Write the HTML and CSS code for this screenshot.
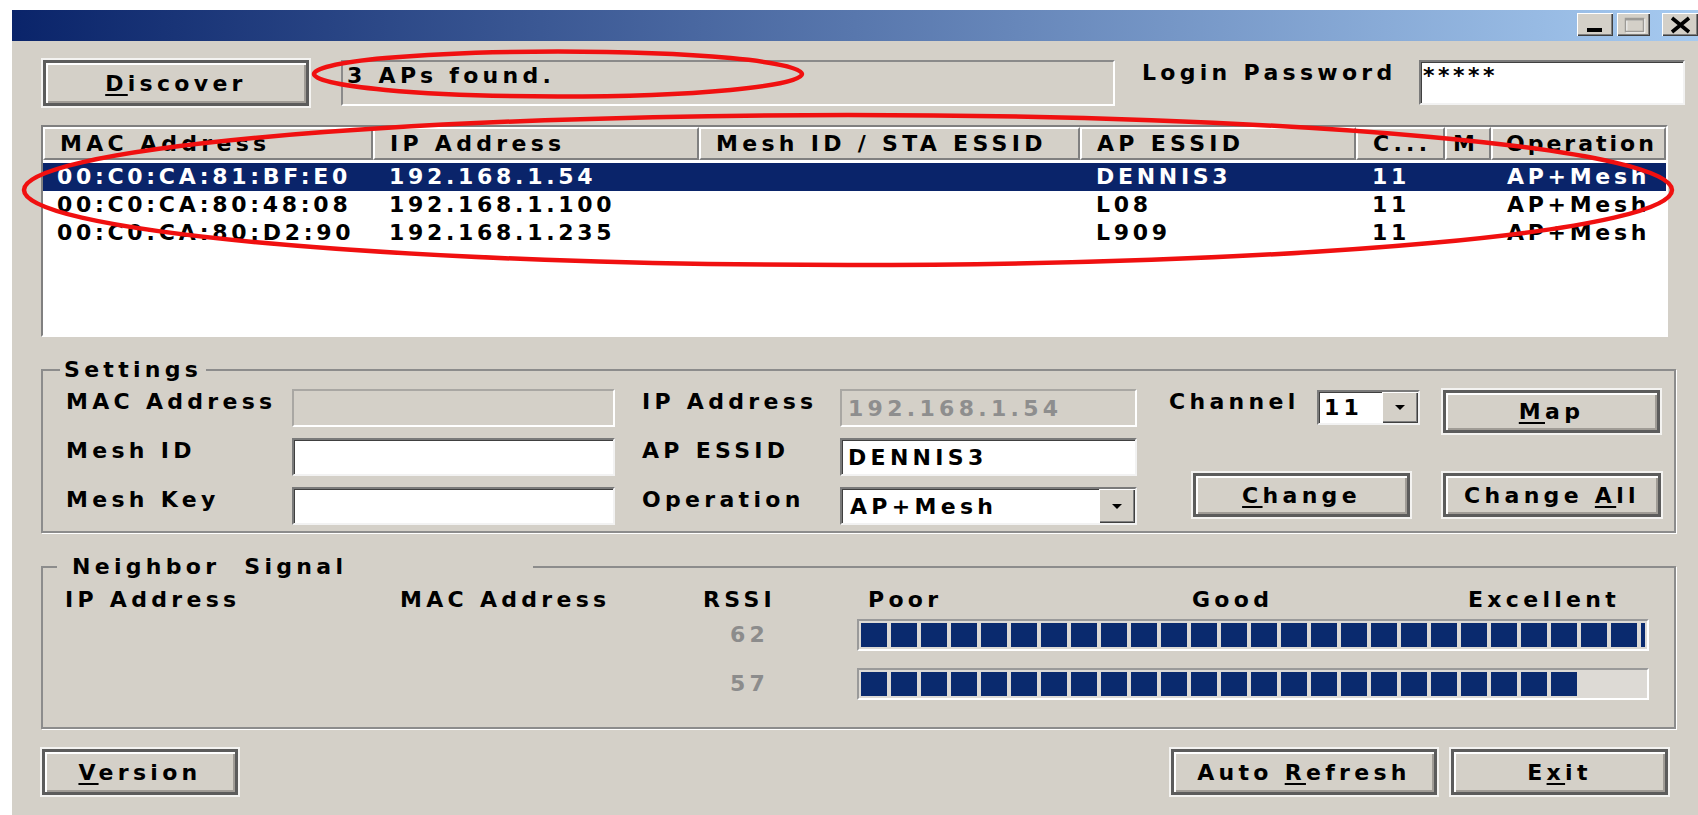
FILE: index.html
```html
<!DOCTYPE html>
<html lang="en">
<head>
<meta charset="utf-8">
<title>Mesh AP Utility</title>
<link rel="stylesheet" href="styles.css">
</head>
<body>
<div class="window">
  <div class="titlebar">
    <span class="cap-btn cap-min">
      <svg width="36" height="23" viewBox="0 0 36 23"><rect x="10" y="15" width="15" height="4" fill="#000"/></svg>
    </span>
    <span class="cap-btn cap-max">
      <svg width="33" height="23" viewBox="0 0 33 23">
        <rect x="9.5" y="6.5" width="18" height="13" fill="none" stroke="#ffffff" stroke-width="1.5"/>
        <rect x="8.5" y="5.5" width="18" height="13" fill="none" stroke="#9c9a96" stroke-width="1.5"/>
        <rect x="8" y="5" width="19" height="2.5" fill="#9c9a96"/>
      </svg>
    </span>
    <span class="cap-btn cap-close">
      <svg width="36" height="23" viewBox="0 0 36 23"><path d="M10 5 L27 19 M27 5 L10 19" stroke="#000" stroke-width="3.6" fill="none"/></svg>
    </span>
  </div>

  <div class="client">
    <div class="top-row">
      <button class="btn discover"><span><u>D</u>iscover</span></button>
      <div class="status">3 APs found.</div>
      <span class="login-label">Login Password</span>
      <div class="field password">*****</div>
    </div>

    <div class="list">
      <div class="list-head">
        <div class="th">MAC Address</div>
        <div class="th">IP Address</div>
        <div class="th">Mesh ID / STA ESSID</div>
        <div class="th">AP ESSID</div>
        <div class="th">C...</div>
        <div class="th th-narrow">M</div>
        <div class="th th-last">Operation</div>
      </div>
      <div class="list-body">
        <div class="list-row selected">
          <div class="td td-mac">00:C0:CA:81:BF:E0</div>
          <div class="td">192.168.1.54</div>
          <div class="td"></div>
          <div class="td">DENNIS3</div>
          <div class="td">11</div>
          <div class="td"></div>
          <div class="td">AP+Mesh</div>
        </div>
        <div class="list-row">
          <div class="td td-mac">00:C0:CA:80:48:08</div>
          <div class="td">192.168.1.100</div>
          <div class="td"></div>
          <div class="td">L08</div>
          <div class="td">11</div>
          <div class="td"></div>
          <div class="td">AP+Mesh</div>
        </div>
        <div class="list-row">
          <div class="td td-mac">00:C0:CA:80:D2:90</div>
          <div class="td">192.168.1.235</div>
          <div class="td"></div>
          <div class="td">L909</div>
          <div class="td">11</div>
          <div class="td"></div>
          <div class="td">AP+Mesh</div>
        </div>
      </div>
    </div>

    <fieldset class="group settings">
      <legend>Settings</legend>
      <div class="settings-grid">
        <span class="lbl">MAC Address</span>
        <div class="field disabled w-left"></div>
        <span class="lbl">IP Address</span>
        <div class="field disabled w-right">192.168.1.54</div>
        <div class="channel">
          <span class="lbl">Channel</span>
          <div class="combo combo-channel">
            <span class="combo-value">11</span>
            <span class="combo-button"></span>
          </div>
        </div>
        <button class="btn btn-map"><span><u>M</u>ap</span></button>

        <span class="lbl">Mesh ID</span>
        <div class="field w-left"></div>
        <span class="lbl">AP ESSID</span>
        <div class="field w-right">DENNIS3</div>
        <button class="btn btn-change"><span><u>C</u>hange</span></button>
        <button class="btn btn-change-all"><span>Change <u>A</u>ll</span></button>

        <span class="lbl">Mesh Key</span>
        <div class="field w-left"></div>
        <span class="lbl">Operation</span>
        <div class="combo w-right">
          <span class="combo-value">AP+Mesh</span>
          <span class="combo-button"></span>
        </div>
      </div>
    </fieldset>

    <fieldset class="group neighbors">
      <legend class="legend-wide">Neighbor&nbsp; Signal</legend>
      <div class="sig-head">
        <span>IP Address</span>
        <span>MAC Address</span>
        <span>RSSI</span>
        <div class="scale">
          <span class="scale-poor">Poor</span>
          <span class="scale-good">Good</span>
          <span>Excellent</span>
        </div>
      </div>
      <div class="sig-row">
        <span></span>
        <span></span>
        <span class="rssi">62</span>
        <div class="meter"><div class="meter-fill" style="width: 100%"></div></div>
      </div>
      <div class="sig-row">
        <span></span>
        <span></span>
        <span class="rssi">57</span>
        <div class="meter"><div class="meter-fill" style="width: 91.5%"></div></div>
      </div>
    </fieldset>

    <div class="bottom-row">
      <button class="btn btn-version"><span><u>V</u>ersion</span></button>
      <button class="btn btn-refresh"><span>Auto <u>R</u>efresh</span></button>
      <button class="btn btn-exit"><span>E<u>x</u>it</span></button>
    </div>
  </div>

  <svg class="annotations" aria-hidden="true">
    <ellipse cx="546" cy="64" rx="244" ry="22.5" fill="none" stroke="#f01010" stroke-width="4.5"/>
    <ellipse cx="836" cy="180" rx="824" ry="75" fill="none" stroke="#f01010" stroke-width="4.5"/>
  </svg>
</div>
</body>
</html>
```

FILE: styles.css
```css
* {
  box-sizing: border-box;
}

html,
body {
  margin: 0;
  height: 100%;
}

body {
  background: #ffffff;
  font-family: "DejaVu Sans", "Liberation Sans", sans-serif;
  font-weight: bold;
  font-size: 22px;
  letter-spacing: 4.3px;
  color: #000000;
  overflow: hidden;
}

/* dialog frame */
.window {
  position: relative;
  margin: 10px 0 0 12px;
  min-height: calc(100vh - 10px);
  background: #d4d0c8;
}

.titlebar {
  display: flex;
  justify-content: flex-end;
  align-items: flex-start;
  height: 31px;
  padding-top: 3px;
  background: linear-gradient(90deg, #0a246a 0%, #a6caf0 100%);
}

.cap-btn {
  display: block;
  height: 23px;
  background: #d4d0c8;
  box-shadow: inset 1px 1px 0 #ffffff, inset -1px -1px 0 #404040, inset -2px -2px 0 #808080;
}

.cap-btn svg {
  display: block;
}

.cap-min {
  width: 36px;
}

.cap-max {
  width: 33px;
  margin-left: 4px;
}

.cap-close {
  width: 36px;
  margin-left: 12px;
}

.client {
  padding: 19px 11px 0 30px;
}

/* push buttons */
.btn {
  display: flex;
  align-items: center;
  justify-content: center;
  padding: 0;
  font: inherit;
  letter-spacing: inherit;
  color: #000000;
  background: #d4d0c8;
  border: 3px solid #5c5c5c;
  box-shadow: inset 2px 2px 0 #ffffff, inset -2px -2px 0 #a09c96, 0 0 0 2px #f4f3f1;
  white-space: nowrap;
}

.btn u {
  text-decoration-thickness: 2px;
  text-underline-offset: 3px;
}

/* top row */
.top-row {
  display: flex;
  align-items: flex-start;
  height: 46px;
}

.discover {
  width: 266px;
  height: 46px;
  margin-left: 1px;
}

.status {
  width: 774px;
  height: 46px;
  margin-left: 32px;
  padding: 1px 4px;
  line-height: 26px;
  border: 2px solid;
  border-color: #8a8a8a #ffffff #ffffff #8a8a8a;
}

.login-label {
  margin-left: 27px;
  line-height: 26px;
  white-space: nowrap;
}

/* edit boxes */
.field {
  display: flex;
  align-items: center;
  height: 38px;
  padding: 0 6px;
  background: #ffffff;
  border: 2px solid;
  border-color: #7a7a7a #f2f2f2 #f2f2f2 #7a7a7a;
  box-shadow: inset 1px 1px 0 #404040;
  white-space: nowrap;
}

.field.disabled {
  background: #d4d0c8;
  color: #8e8e8e;
  border-color: #a9a7a3 #ffffff #ffffff #a9a7a3;
  box-shadow: none;
}

.password {
  width: 266px;
  height: 45px;
  margin-left: auto;
  margin-right: 2px;
  align-items: flex-start;
  padding: 3px 2px 0;
  line-height: 22px;
  letter-spacing: 3.5px;
}

/* list view */
.list {
  height: 212px;
  margin: 19px 19px 0 -1px;
  background: #ffffff;
  border: 2px solid;
  border-color: #808080 #ffffff #ffffff #808080;
  overflow: hidden;
}

.list-head,
.list-row {
  display: grid;
  grid-template-columns: 330px 326px 381px 276px 89px 46px 175px;
}

.list-head {
  height: 33px;
  background: #d4d0c8;
}

.th {
  padding-left: 15px;
  line-height: 29px;
  white-space: nowrap;
  overflow: hidden;
  border: 2px solid;
  border-color: #ffffff #808080 #808080 #ffffff;
}

.th-narrow {
  padding-left: 6px;
}

.th-last {
  padding-left: 13px;
  letter-spacing: 3px;
}

.list-body {
  padding-top: 3px;
}

.list-row {
  height: 28px;
  line-height: 28px;
  letter-spacing: 3.7px;
}

.list-row.selected {
  background: #0a246a;
  color: #ffffff;
}

.td {
  padding-left: 16px;
  white-space: nowrap;
  overflow: hidden;
}

.td-mac {
  padding-left: 14px;
}

/* group boxes */
.group {
  min-width: 0;
  margin: 20px 11px 0 -1px;
  border: 2px solid #8c8c8c;
  box-shadow: 1px 1px 0 #ffffff;
}

.group legend {
  margin-left: -6px;
  padding: 0 4px;
  line-height: 26px;
}

.settings {
  padding: 6px 14px 6px 23px;
}

.settings-grid {
  display: grid;
  grid-template-columns: 226px 350px 198px 297px 306px 217px;
  grid-template-rows: 38px 38px 38px;
  row-gap: 11px;
}

.lbl {
  align-self: start;
  line-height: 26px;
  white-space: nowrap;
}

.w-left {
  width: 323px;
}

.w-right {
  width: 297px;
}

.channel {
  display: flex;
  align-items: flex-start;
  padding: 0 23px 0 32px;
}

/* drop-down lists */
.combo {
  display: flex;
  height: 38px;
  background: #ffffff;
  border: 2px solid;
  border-color: #7a7a7a #f2f2f2 #f2f2f2 #7a7a7a;
  box-shadow: inset 1px 1px 0 #404040;
}

.combo-channel {
  width: 103px;
  height: 35px;
  margin: 1px 0 0 auto;
}

.combo-value {
  flex: 1;
  display: flex;
  align-items: center;
  padding-left: 8px;
  white-space: nowrap;
}

.combo-channel .combo-value {
  padding-left: 5px;
}

.combo-button {
  display: flex;
  align-items: center;
  justify-content: center;
  width: 36px;
  background: #d4d0c8;
  box-shadow: inset 1px 1px 0 #ffffff, inset -1px -1px 0 #404040, inset -2px -2px 0 #808080;
}

.combo-button::after {
  content: "";
  border-left: 5px solid transparent;
  border-right: 5px solid transparent;
  border-top: 5px solid #000000;
}

.btn-map {
  align-self: start;
  width: 217px;
  height: 43px;
  margin-top: 1px;
}

.btn-change,
.btn-change-all {
  grid-row: 2 / span 2;
  align-self: end;
  width: 217px;
  height: 44px;
  margin-bottom: 8px;
}

.btn-change {
  grid-column: 5;
  margin-left: 56px;
}

.btn-change-all {
  grid-column: 6;
  width: 218px;
}

/* neighbour signal strength */
.neighbors {
  margin-top: 21px;
  padding: 7px 25px 27px 22px;
}

.neighbors .legend-wide {
  margin-left: -8px;
  padding: 0 186px 0 15px;
}

.sig-head,
.sig-row {
  display: grid;
  grid-template-columns: 335px 303px 154px 1fr;
}

.sig-head {
  line-height: 26px;
  margin-bottom: 6px;
  white-space: nowrap;
}

.scale {
  display: flex;
}

.scale-poor {
  width: 324px;
  margin-left: 11px;
}

.scale-good {
  width: 276px;
}

.sig-row {
  height: 32px;
  line-height: 32px;
}

.sig-row + .sig-row {
  margin-top: 17px;
}

.rssi {
  padding-left: 27px;
  color: #8c8c8c;
}

.meter {
  height: 32px;
  padding: 2px;
  background: #dddad5;
  border: 2px solid;
  border-color: #9a9a9a #ffffff #ffffff #9a9a9a;
}

.meter-fill {
  height: 100%;
  background: repeating-linear-gradient(90deg, #0a2a6e 0 26px, transparent 26px 30px);
}

/* bottom buttons */
.bottom-row {
  display: flex;
  margin-top: 20px;
}

.bottom-row .btn {
  height: 46px;
}

.btn-version {
  width: 196px;
}

.btn-refresh {
  width: 266px;
  margin-left: auto;
}

.btn-exit {
  width: 217px;
  margin: 0 19px 0 14px;
}

/* red hand-drawn marks */
.annotations {
  position: absolute;
  left: 0;
  top: 0;
  width: 100%;
  height: 100%;
  pointer-events: none;
  overflow: visible;
}
```
